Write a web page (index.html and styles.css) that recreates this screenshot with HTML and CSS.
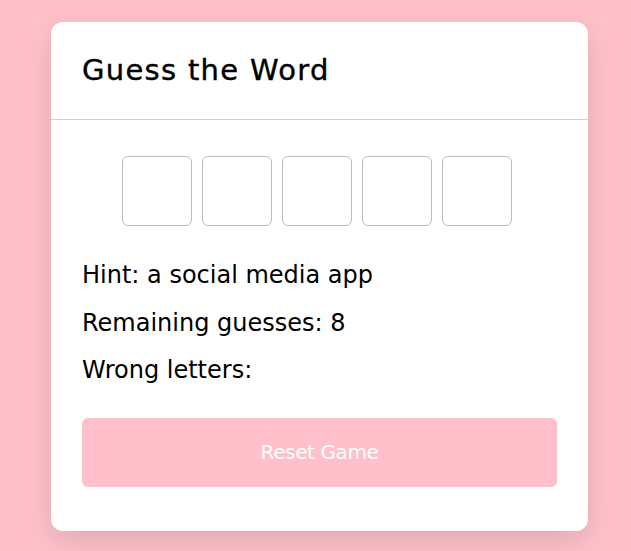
FILE: index.html
```html
<!DOCTYPE html>
<html lang="en">
<head>
<meta charset="utf-8">
<title>Guess the Word</title>
<link rel="stylesheet" href="styles.css">
</head>
<body>
<div class="card">
  <div class="card-header">
    <h1 class="title">Guess the Word</h1>
  </div>
  <div class="card-body">
    <div class="boxes">
      <div class="box"></div>
      <div class="box"></div>
      <div class="box"></div>
      <div class="box"></div>
      <div class="box"></div>
    </div>
    <p class="line">Hint: a social media app</p>
    <p class="line">Remaining guesses: 8</p>
    <p class="line">Wrong letters:</p>
    <button class="reset">Reset Game</button>
  </div>
</div>
</body>
</html>
```

FILE: styles.css
```css
html, body {
  margin: 0;
  padding: 0;
}
body {
  background: #ffc0cb;
  font-family: "DejaVu Sans", "Liberation Sans", sans-serif;
  color: #000;
  padding-top: 22px;
  height: 551px;
  box-sizing: border-box;
  overflow: hidden;
}
.card {
  width: 537px;
  margin-left: 51px;
  background: #fff;
  border-radius: 12px;
  box-shadow: 0 10px 30px rgba(0, 0, 0, 0.12);
}
.card-header {
  padding: 30px 31px;
  border-bottom: 1px solid #d0d0d0;
}
.title {
  margin: 0;
  font-size: 29px;
  font-weight: 500;
  letter-spacing: 1.3px;
  line-height: 37px;
  -webkit-text-stroke: 0.4px #000;
}
.card-body {
  padding: 36px 31px 44px;
}
.boxes {
  display: flex;
  justify-content: center;
  gap: 10px;
  padding-right: 5px;
  margin-bottom: 32px;
}
.box {
  width: 70px;
  height: 70px;
  box-sizing: border-box;
  border: 1px solid #bdbdbd;
  border-radius: 6px;
}
.line {
  margin: 0 0 12px;
  font-size: 24px;
  line-height: 35.5px;
}
.reset {
  display: block;
  width: 100%;
  height: 69px;
  margin-top: 29px;
  border: none;
  border-radius: 6px;
  background: #ffc0cb;
  color: #fff;
  font-family: inherit;
  font-size: 20px;
  letter-spacing: -0.4px;
}
```
